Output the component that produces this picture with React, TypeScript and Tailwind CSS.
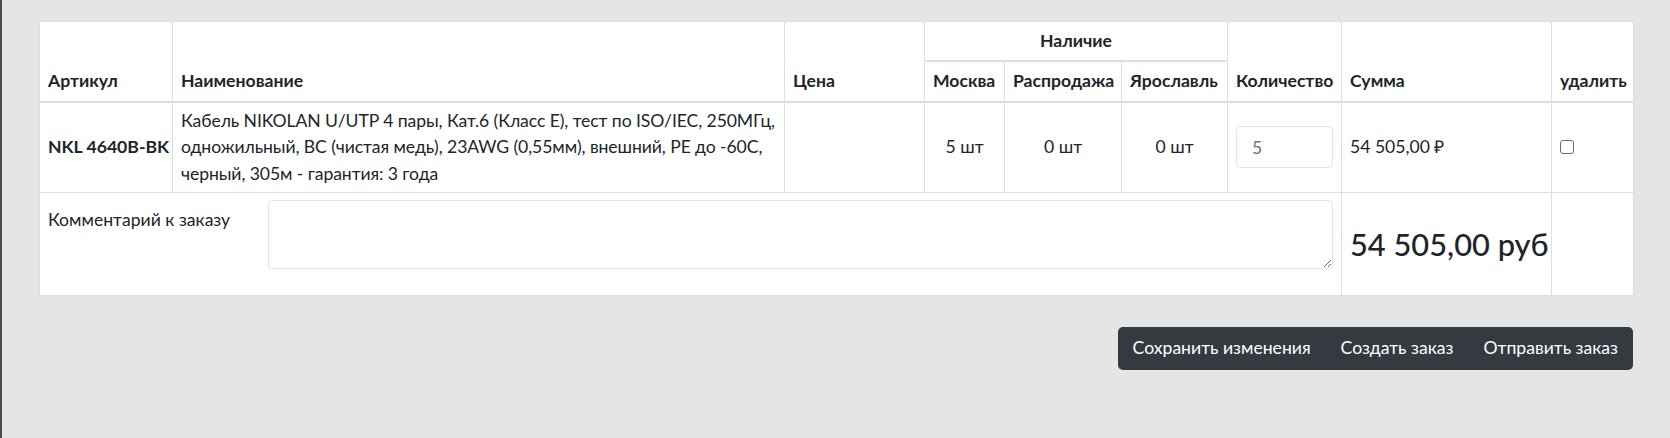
import React from 'react';

const stock = [
  { city: 'Москва', value: '5 шт' },
  { city: 'Распродажа', value: '0 шт' },
  { city: 'Ярославль', value: '0 шт' },
];

const cell = 'border border-[#dcdfe2] px-2';
const head = `${cell} py-[6px] text-left align-bottom font-bold whitespace-nowrap`;

export default function App() {
  return (
    <div className="min-h-screen bg-[#e4e5e7] border-l-2 border-[#4a4a4a] pl-[37px] pr-[37px] pt-[21px] font-['Lato',sans-serif] text-[17.6px] leading-[26.4px] text-[#212529]">
      {/* Cart table */}
      <table className="w-full table-fixed border-collapse bg-white">
        <colgroup>
          <col className="w-[133px]" />
          <col className="w-[612px]" />
          <col className="w-[140px]" />
          <col className="w-[80px]" />
          <col className="w-[117px]" />
          <col className="w-[106px]" />
          <col className="w-[114px]" />
          <col className="w-[210px]" />
          <col className="w-[82px]" />
        </colgroup>
        <thead>
          <tr>
            <th rowSpan={2} className={`${head} border-b-2`}>Артикул</th>
            <th rowSpan={2} className={`${head} border-b-2`}>Наименование</th>
            <th rowSpan={2} className={`${head} border-b-2`}>Цена</th>
            <th colSpan={3} className={`${cell} border-b-2 py-[6px] text-center font-bold`}>Наличие</th>
            <th rowSpan={2} className={`${head} border-b-2`}>Количество</th>
            <th rowSpan={2} className={`${head} border-b-2`}>Сумма</th>
            <th rowSpan={2} className={`${head} border-b-2`}>удалить</th>
          </tr>
          <tr>
            {stock.map((s) => (
              <th key={s.city} className={`${head} border-b-2`}>
                {s.city}
              </th>
            ))}
          </tr>
        </thead>
        <tbody>
          <tr>
            <td className={`${cell} py-[5px] align-middle font-bold whitespace-nowrap`}>NKL 4640B-BK</td>
            <td className={`${cell} py-[5px] align-middle whitespace-nowrap tracking-[-0.005em]`}>
              Кабель NIKOLAN U/UTP 4 пары, Кат.6 (Класс E), тест по ISO/IEC, 250МГц,
              <br />
              одножильный, BC (чистая медь), 23AWG (0,55мм), внешний, PE до -60C,
              <br />
              черный, 305м - гарантия: 3 года
            </td>
            <td className={`${cell} py-[5px]`}></td>
            {stock.map((s) => (
              <td key={s.city} className={`${cell} py-[5px] align-middle text-center`}>
                {s.value}
              </td>
            ))}
            <td className={`${cell} py-[5px] align-middle`}>
              <input
                type="text"
                defaultValue="5"
                className="w-full h-[42px] rounded-[4px] border border-[#e3e5e8] bg-white px-[15px] text-[#707579] outline-none"
              />
            </td>
            <td className={`${cell} py-[5px] align-middle whitespace-nowrap`}>54 505,00 ₽</td>
            <td className={`${cell} py-[5px] align-middle`}>
              <input
                type="checkbox"
                className="block h-[14px] w-[14px] appearance-none rounded-[3px] border border-[#6b6b6b] bg-white"
              />
            </td>
          </tr>
          <tr>
            <td colSpan={7} className={`${cell} pt-[7px] pb-[26px] align-top`}>
              <div className="flex">
                <label className="w-[220px] shrink-0 pt-[7px]">Комментарий к заказу</label>
                <textarea
                  rows={2}
                  className="block h-[69px] flex-1 rounded-[4px] border border-[#e3e5e8] bg-white px-3 py-[6px] outline-none"
                />
              </div>
            </td>
            <td className={`${cell} align-middle`}>
              <h3 className="text-[30.8px] leading-[37px] font-medium whitespace-nowrap">54 505,00 руб</h3>
            </td>
            <td className={cell}></td>
          </tr>
        </tbody>
      </table>

      {/* Actions */}
      <div className="mt-[31px] flex justify-end">
        <div className="flex overflow-hidden rounded-[5px] bg-[#343a40] text-white">
          <button className="h-[43px] px-[15px]">Сохранить изменения</button>
          <button className="h-[43px] px-[15px]">Создать заказ</button>
          <button className="h-[43px] px-[15px]">Отправить заказ</button>
        </div>
      </div>
    </div>
  );
}
